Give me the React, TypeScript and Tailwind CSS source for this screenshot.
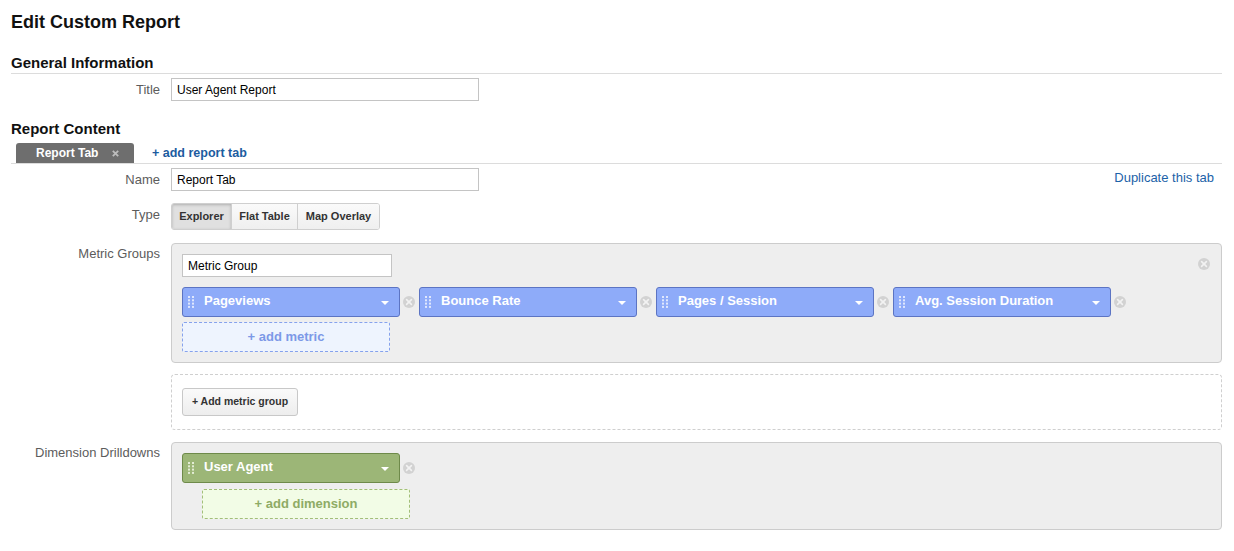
import React from "react";

const font = { fontFamily: '"Liberation Sans", Arial, sans-serif' };

const Label: React.FC<{ text: string; pt?: string }> = ({ text, pt = "pt-[4px]" }) => (
  <div className={`w-[149px] shrink-0 text-right text-[13px] leading-[16px] text-[#5c5c5c] ${pt}`}>{text}</div>
);

const RemoveIcon: React.FC = () => (
  <svg width="12" height="12" viewBox="0 0 12 12" className="shrink-0">
    <circle cx="6" cy="6" r="6" fill="#d2d2d2" />
    <path d="M3.6 3.6 L8.4 8.4 M8.4 3.6 L3.6 8.4" stroke="#f2f2f2" strokeWidth="1.6" strokeLinecap="round" />
  </svg>
);

const Handle: React.FC<{ color: string }> = ({ color }) => (
  <svg width="6" height="12" viewBox="0 0 6 12" className="shrink-0">
    {[0, 3.3, 6.6, 9.9].map((y) => (
      <React.Fragment key={y}>
        <rect x="0" y={y} width="2" height="2" fill={color} />
        <rect x="4" y={y} width="2" height="2" fill={color} />
      </React.Fragment>
    ))}
  </svg>
);

interface ChipProps {
  label: string;
  variant: "metric" | "dimension";
}

const Chip: React.FC<ChipProps> = ({ label, variant }) => {
  const cls =
    variant === "metric" ? "bg-[#8eabf9] border-[#5c74c3]" : "bg-[#9cb677] border-[#6e8a4a]";
  return (
    <div className={`w-[218px] h-[30px] shrink-0 rounded-[3px] border flex items-center ${cls}`}>
      <div className="ml-[5px]">
        <Handle color={variant === "metric" ? "#dfe7fd" : "#e3ecd4"} />
      </div>
      <span className="ml-[10px] mb-[2px] flex-1 text-[13px] font-bold text-white leading-[16px]">{label}</span>
      <svg width="8" height="4" viewBox="0 0 8 4" className="mr-[10px] mt-[2px]">
        <path d="M0 0 L8 0 L4 4 Z" fill="#ffffff" />
      </svg>
    </div>
  );
};

const ChipWithRemove: React.FC<ChipProps> = (props) => (
  <div className="flex items-center">
    <Chip {...props} />
    <div className="ml-[3px] mr-[4px] flex">
      <RemoveIcon />
    </div>
  </div>
);

const TypeButton: React.FC<{ text: string; width: string; active?: boolean; last?: boolean }> = ({
  text,
  width,
  active,
  last,
}) => (
  <div
    className={`${width} h-full flex items-center justify-center text-[11px] font-bold text-[#333] ${
      last ? "" : "border-r border-[#cfcfcf]"
    } ${
      active
        ? "bg-[#e0e0e0] shadow-[inset_0_1px_3px_rgba(0,0,0,0.22)]"
        : "bg-gradient-to-b from-[#fafafa] to-[#efefef]"
    }`}
  >
    {text}
  </div>
);

const App: React.FC = () => {
  const metrics = ["Pageviews", "Bounce Rate", "Pages / Session", "Avg. Session Duration"];

  return (
    <main className="min-h-screen bg-white pl-[11px] pr-[12px] text-[#222]" style={font}>
      <h1 className="pt-[10px] text-[18px] leading-[24px] font-bold text-[#111]">Edit Custom Report</h1>

      <h2 className="mt-[18px] text-[15px] leading-[21px] font-bold text-[#111] border-b border-[#dcdcdc]">
        General Information
      </h2>
      <div className="flex items-start mt-[4px]">
        <Label text="Title" />
        <div className="ml-[11px] w-[308px] h-[23px] border border-[#c4c4c4] flex items-center px-[5px] text-[12px] text-black">
          User Agent Report
        </div>
      </div>

      <h2 className="mt-[17px] text-[15px] leading-[21px] font-bold text-[#111]">Report Content</h2>
      <div className="mt-[4px] flex items-end border-b border-[#dcdcdc]">
        <div className="ml-[5px] w-[118px] h-[20px] rounded-t-[3px] bg-[#6e6e6e] flex items-center">
          <span className="ml-[20px] text-[12px] font-bold text-white leading-[14px]">Report Tab</span>
          <svg width="7" height="7" viewBox="0 0 7 7" className="ml-[14px]">
            <path d="M0.8 0.8 L6.2 6.2 M6.2 0.8 L0.8 6.2" stroke="#bdbdbd" strokeWidth="1.8" />
          </svg>
        </div>
        <span className="ml-[18px] h-[20px] flex items-center text-[12.5px] font-bold text-[#1c5c9f]">
          + add report tab
        </span>
      </div>

      <div className="flex items-start mt-[4px]">
        <Label text="Name" />
        <div className="ml-[11px] w-[308px] h-[23px] border border-[#c4c4c4] flex items-center px-[5px] text-[12px] text-black">
          Report Tab
        </div>
        <div className="flex-1 text-right pr-[8px] pt-[2px] text-[13px] leading-[16px] text-[#1c62a8]">
          Duplicate this tab
        </div>
      </div>

      <div className="flex items-start mt-[12px]">
        <Label text="Type" />
        <div className="ml-[11px] h-[27px] flex border border-[#cfcfcf] rounded-[3px] overflow-hidden">
          <TypeButton text="Explorer" width="w-[60px]" active />
          <TypeButton text="Flat Table" width="w-[66px]" />
          <TypeButton text="Map Overlay" width="w-[81px]" last />
        </div>
      </div>

      <div className="flex items-start mt-[13px]">
        <Label text="Metric Groups" pt="pt-[3px]" />
        <div className="ml-[11px] flex-1 flex flex-col">
          <div className="relative rounded-[4px] border border-[#cccccc] bg-[#eeeeee] px-[10px] pt-[10px] pb-[10px]">
            <div className="absolute right-[11px] top-[14px] flex">
              <RemoveIcon />
            </div>
            <div className="w-[210px] h-[23px] border border-[#c4c4c4] bg-white flex items-center px-[5px] text-[12px] text-black">
              Metric Group
            </div>
            <div className="mt-[10px] flex items-center">
              {metrics.map((m) => (
                <ChipWithRemove key={m} label={m} variant="metric" />
              ))}
            </div>
            <div className="mt-[5px] w-[208px] h-[30px] border border-dashed border-[#86a2ec] rounded-[2px] bg-[#eef4fe] flex items-center justify-center text-[13px] font-bold text-[#7c99e7]">
              + add metric
            </div>
          </div>

          <div className="mt-[11px] rounded-[4px] border border-dashed border-[#cfcfcf] px-[10px] pt-[13px] pb-[13px]">
            <div className="w-[116px] h-[28px] rounded-[3px] border border-[#c8c8c8] bg-gradient-to-b from-[#fafafa] to-[#ededed] flex items-center justify-center text-[10.5px] font-bold text-[#333]">
              + Add metric group
            </div>
          </div>
        </div>
      </div>

      <div className="flex items-start mt-[12px]">
        <Label text="Dimension Drilldowns" pt="pt-[3px]" />
        <div className="ml-[11px] flex-1 rounded-[4px] border border-[#cccccc] bg-[#eeeeee] px-[10px] pt-[10px] pb-[10px]">
          <ChipWithRemove label="User Agent" variant="dimension" />
          <div className="mt-[6px] ml-[20px] w-[208px] h-[30px] border border-dashed border-[#a3bf79] rounded-[2px] bg-[#f2fce6] flex items-center justify-center text-[13px] font-bold text-[#8eab65]">
            + add dimension
          </div>
        </div>
      </div>
    </main>
  );
};

export default App;
